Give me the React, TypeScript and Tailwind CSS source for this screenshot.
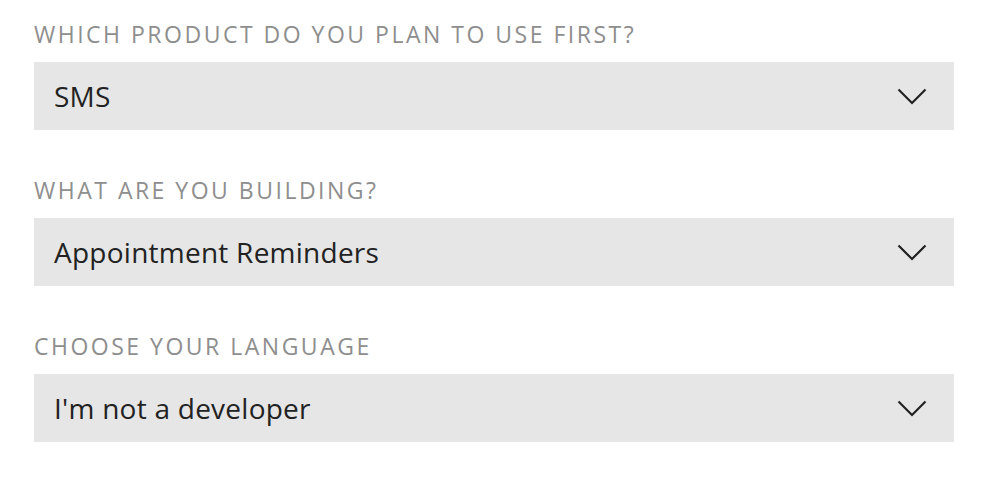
import React from "react";

const fields = [
  { label: "WHICH PRODUCT DO YOU PLAN TO USE FIRST?", value: "SMS" },
  { label: "WHAT ARE YOU BUILDING?", value: "Appointment Reminders" },
  { label: "CHOOSE YOUR LANGUAGE", value: "I'm not a developer" },
];

function Chevron() {
  return (
    <svg width="30" height="17" viewBox="0 0 30 17" fill="none">
      <path d="M1.5 1.5 L15 15 L28.5 1.5" stroke="#222222" strokeWidth="2.2" />
    </svg>
  );
}

export default function App() {
  return (
    <div
      className="w-[986px] h-[478px] bg-white pl-[34px] pr-[32px] pt-[18px] flex flex-col gap-[44px]"
      style={{ fontFamily: '"Open Sans", "Liberation Sans", sans-serif' }}
    >
      {fields.map((f) => (
        <div key={f.label} className="flex flex-col gap-[12px]">
          <div className="text-[23px] leading-[32px] tracking-[2.5px] text-[#8e8e8e]">{f.label}</div>
          <div className="h-[68px] bg-[#e6e6e6] flex items-center justify-between pl-[20px] pr-[27px]">
            <span className="text-[28px] leading-[38px] tracking-[0.25px] text-[#222222]">{f.value}</span>
            <Chevron />
          </div>
        </div>
      ))}
    </div>
  );
}
